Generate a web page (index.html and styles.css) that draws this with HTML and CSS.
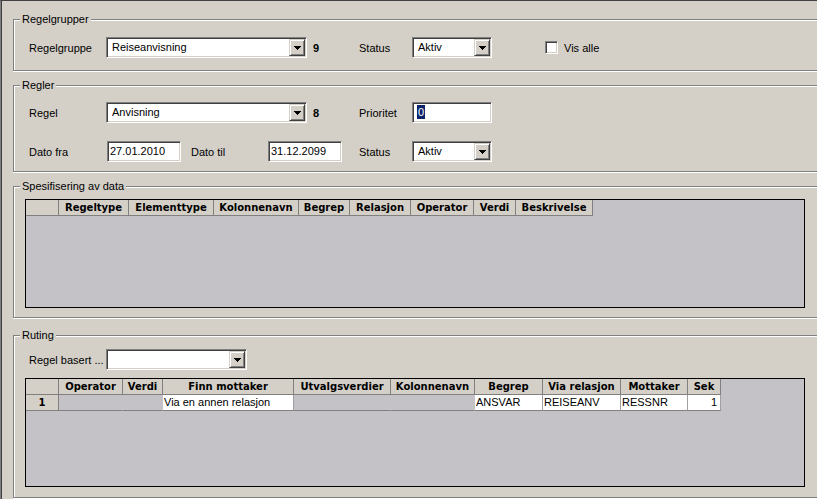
FILE: index.html
```html
<!DOCTYPE html>
<html>
<head>
<meta charset="utf-8">
<link rel="stylesheet" href="styles.css">
</head>
<body>
<div class="window">
  <section class="group g1">
    <span class="legend">Regelgrupper</span>
    <div class="row">
      <span class="lbl w77">Regelgruppe</span>
      <div class="combo w201"><span class="val">Reiseanvisning</span><span class="btn"><svg width="7" height="4" viewBox="0 0 7 4"><path d="M0 0H7V1H6V2H5V3H4V4H3V3H2V2H1V1H0Z"/></svg></span></div>
      <span class="count">9</span>
      <span class="lbl w53">Status</span>
      <div class="combo w80"><span class="val">Aktiv</span><span class="btn"><svg width="7" height="4" viewBox="0 0 7 4"><path d="M0 0H7V1H6V2H5V3H4V4H3V3H2V2H1V1H0Z"/></svg></span></div>
      <span class="check"><span class="box"></span>Vis alle</span>
    </div>
  </section>

  <section class="group g2">
    <span class="legend">Regler</span>
    <div class="row">
      <span class="lbl w77">Regel</span>
      <div class="combo w201"><span class="val">Anvisning</span><span class="btn"><svg width="7" height="4" viewBox="0 0 7 4"><path d="M0 0H7V1H6V2H5V3H4V4H3V3H2V2H1V1H0Z"/></svg></span></div>
      <span class="count">8</span>
      <span class="lbl w53">Prioritet</span>
      <div class="input w80"><span class="sel">0</span></div>
    </div>
    <div class="row r2">
      <span class="lbl w78">Dato fra</span>
      <div class="input w74">27.01.2010</div>
      <span class="lbl w77 ml10">Dato til</span>
      <div class="input w74">31.12.2099</div>
      <span class="lbl w53 ml17">Status</span>
      <div class="combo w80"><span class="val">Aktiv</span><span class="btn"><svg width="7" height="4" viewBox="0 0 7 4"><path d="M0 0H7V1H6V2H5V3H4V4H3V3H2V2H1V1H0Z"/></svg></span></div>
    </div>
  </section>

  <section class="group g3">
    <span class="legend">Spesifisering av data</span>
    <div class="grid">
      <div class="thead">
        <div class="th c33"></div>
        <div class="th" style="width:70px">Regeltype</div>
        <div class="th" style="width:85px">Elementtype</div>
        <div class="th" style="width:85px">Kolonnenavn</div>
        <div class="th" style="width:51px">Begrep</div>
        <div class="th" style="width:61px">Relasjon</div>
        <div class="th" style="width:63px">Operator</div>
        <div class="th" style="width:42px">Verdi</div>
        <div class="th" style="width:77px">Beskrivelse</div>
      </div>
    </div>
  </section>

  <section class="group g4">
    <span class="legend">Ruting</span>
    <div class="row">
      <span class="lbl w77">Regel basert ...</span>
      <div class="combo w141"><span class="val"></span><span class="btn"><svg width="7" height="4" viewBox="0 0 7 4"><path d="M0 0H7V1H6V2H5V3H4V4H3V3H2V2H1V1H0Z"/></svg></span></div>
    </div>
    <div class="grid grid2">
      <div class="thead">
        <div class="th c33"></div>
        <div class="th" style="width:64px">Operator</div>
        <div class="th" style="width:40px">Verdi</div>
        <div class="th" style="width:131px">Finn mottaker</div>
        <div class="th" style="width:97px">Utvalgsverdier</div>
        <div class="th" style="width:84px">Kolonnenavn</div>
        <div class="th" style="width:68px">Begrep</div>
        <div class="th" style="width:78px">Via relasjon</div>
        <div class="th" style="width:67px">Mottaker</div>
        <div class="th" style="width:33px">Sek</div>
      </div>
      <div class="tr">
        <div class="rh c33">1</div>
        <div class="td empty" style="width:64px"></div>
        <div class="td empty" style="width:40px"></div>
        <div class="td" style="width:131px">Via en annen relasjon</div>
        <div class="td empty" style="width:97px"></div>
        <div class="td empty" style="width:84px"></div>
        <div class="td" style="width:68px">ANSVAR</div>
        <div class="td" style="width:78px">REISEANV</div>
        <div class="td" style="width:67px">RESSNR</div>
        <div class="td num" style="width:33px">1</div>
      </div>
    </div>
  </section>
</div>
</body>
</html>
```

FILE: styles.css
```css
* { box-sizing: border-box; }
html, body { margin: 0; padding: 0; }
body {
  width: 817px;
  height: 499px;
  overflow: hidden;
  background: #d4d0c8;
  font-family: "Liberation Sans", Arial, sans-serif;
  font-size: 11px;
  color: #000;
}
.window {
  height: 499px;
  border-top: 1px solid #404040;
  border-left: 1px solid #808080;
  box-shadow: inset 1px 0 0 #404040;
  padding-left: 12px;
  overflow: hidden;
}
.group {
  position: relative;
  width: 830px;
  border: 1px solid #808080;
  box-shadow: inset 1px 1px 0 #fff, 0 1px 0 #fff;
  padding-left: 15px;
}
.g1 { margin-top: 18px; height: 52px; padding-top: 17px; }
.g2 { margin-top: 14px; height: 87px; padding-top: 16px; }
.g3 { margin-top: 14px; height: 132px; padding-top: 12px; padding-left: 11px; }
.g4 { margin-top: 17px; height: 163px; padding-top: 13px; padding-left: 11px; }
.g4 .row { margin-left: 4px; }
.legend {
  position: absolute;
  left: 6px;
  top: -7px;
  padding: 0 2px;
  background: #d4d0c8;
  line-height: 13px;
}
.row {
  display: flex;
  align-items: center;
  height: 21px;
}
.r2 { margin-top: 18px; }
.lbl { white-space: nowrap; }
.w77 { width: 77px; }
.w78 { width: 78px; }
.w53 { width: 53px; }
.w74 { width: 74px; }
.w80 { width: 80px; }
.w141 { width: 141px; }
.w201 { width: 201px; }
.ml10 { margin-left: 10px; }
.ml17 { margin-left: 17px; }
.count {
  width: 46px;
  margin-left: 6px;
  font-weight: bold;
}
.combo, .input {
  height: 21px;
  background: #fff;
  border: 1px solid;
  border-color: #808080 #fff #fff #808080;
  box-shadow: inset 1px 1px 0 #404040, inset -1px -1px 0 #d4d0c8;
  padding: 1px;
}
.combo { display: flex; }
.combo .val {
  flex: 1;
  padding-left: 4px;
  line-height: 17px;
  white-space: nowrap;
}
.btn {
  width: 16px;
  height: 17px;
  background: #d4d0c8;
  border: 1px solid;
  border-color: #d4d0c8 #404040 #404040 #d4d0c8;
  box-shadow: inset 1px 1px 0 #fff, inset -1px -1px 0 #808080;
  display: flex;
  align-items: center;
  justify-content: center;
}
.btn svg { display: block; fill: #000; shape-rendering: crispEdges; }
.input {
  padding-left: 2px;
  line-height: 17px;
  white-space: nowrap;
}
.sel {
  display: inline-block;
  margin-left: 2px;
  padding: 0 1px;
  background: #0a246a;
  color: #fff;
  line-height: 14px;
  margin-top: 1px;
  vertical-align: top;
}
.check {
  display: flex;
  align-items: center;
  margin-left: 53px;
}
.check .box {
  width: 13px;
  height: 13px;
  margin-right: 6px;
  background: #fff;
  border: 1px solid;
  border-color: #808080 #fff #fff #808080;
  box-shadow: inset 1px 1px 0 #404040, inset -1px -1px 0 #d4d0c8;
}
.grid {
  width: 780px;
  height: 109px;
  border: 1px solid #000;
  background: #c4c2c6;
}
.grid2 { margin-top: 8px; }
.thead, .tr { display: flex; height: 16px; }
.th, .rh {
  flex: none;
  height: 16px;
  background: #d4d0c8;
  border-right: 1px solid #808080;
  border-bottom: 1px solid #808080;
  font-family: "DejaVu Sans", Verdana, sans-serif;
  font-weight: bold;
  font-size: 10px;
  line-height: 15px;
  text-align: center;
  white-space: nowrap;
  overflow: hidden;
}
.c33 { width: 33px; }
.td {
  flex: none;
  height: 16px;
  background: #fff;
  border-right: 1px solid #a0a0a0;
  border-bottom: 1px solid #808080;
  padding-left: 1px;
  line-height: 15px;
  white-space: nowrap;
  overflow: hidden;
}
.td.empty { background: #c4c2c6; border-right-color: #c4c2c6; }
.td.num { text-align: right; padding-right: 3px; }
```
